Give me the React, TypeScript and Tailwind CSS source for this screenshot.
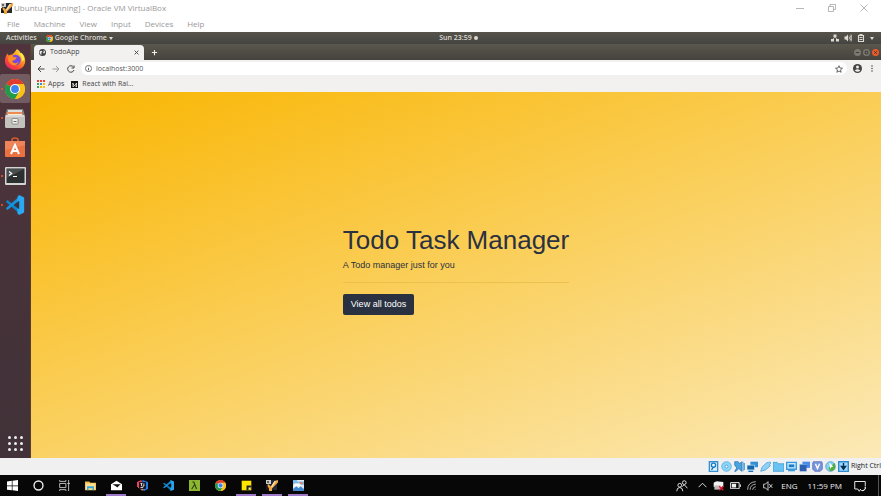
import React from "react";

type IconProps = { className?: string };

const uiFont = "font-['Open_Sans','Noto_Sans',sans-serif]";

function VirtualBoxLogo({ className }: IconProps) {
  return (
    <svg viewBox="0 0 12 12" className={className} aria-hidden="true">
      <path d="M1 1h10v10H1z" fill="#1d2740" />
      <path d="M0 1h5v4H0z" fill="#cfcdc6" />
      <path d="M1 2h2v2H1z" fill="#5e646e" />
      <path d="M0 6l3 1v4H0z" fill="#1a1a1a" />
      <path d="M2 5l3 2.500L8.500 2 12 1v2.500L8 7.500 6 9.500V12H3V9.500L1.500 7z" fill="#f2a53c" />
      <path d="M5 7.500L8.500 2l1.500.5L6 8.500z" fill="#ffe0a0" />
      <path d="M8 8.500l3-1V11H8z" fill="#2b2b2b" />
    </svg>
  );
}

function ChromeLogo({ className }: IconProps) {
  return (
    <svg viewBox="0 0 24 24" className={className} aria-hidden="true">
      <circle cx="12" cy="12" r="12" fill="#fbc116" />
      <path d="M12 12L1.6 6A12 12 0 0 1 22.4 6z" fill="#e33b2e" />
      <path d="M1.6 6A12 12 0 0 0 12 24l5.2-9L12 12z" fill="#229a4b" />
      <path d="M12 6h10.4A12 12 0 0 1 12 24l5.2-9z" fill="#fbc116" />
      <circle cx="12" cy="12" r="6" fill="#fff" />
      <circle cx="12" cy="12" r="4.7" fill="#3f83ee" />
    </svg>
  );
}

function FirefoxLogo({ className }: IconProps) {
  return (
    <svg viewBox="0 0 24 24" className={className} aria-hidden="true">
      <defs>
        <linearGradient id="fox" x1="0.9" y1="0" x2="0.2" y2="1">
          <stop offset="0" stopColor="#fff04a" />
          <stop offset="0.4" stopColor="#ff9a20" />
          <stop offset="0.75" stopColor="#fa4338" />
          <stop offset="1" stopColor="#e32474" />
        </linearGradient>
      </defs>
      <path d="M4 5l1 2q2-1 4-1l2-2q3-3 3-4 4 2 5 6l1-1q4 5 3 10-2 8-11 8Q2 22 1 14 1 8 4 5z" fill="url(#fox)" />
      <circle cx="12.5" cy="12" r="5.8" fill="#7548df" />
      <path d="M5 8q3-2 6 1h3l-2 3q-3 0-3 2 3 3 7 0-3 6-8 3-5-4-3-9z" fill="#ff8b25" />
      <path d="M16 5q5 4 3 9l3-2q0-5-3-8z" fill="#ffe94a" />
    </svg>
  );
}

function FilesIcon({ className }: IconProps) {
  return (
    <svg viewBox="0 0 20 20" className={className} aria-hidden="true">
      <path d="M2 1h16l2 7H0z" fill="#85827d" />
      <path d="M3 2h14v2H3z" fill="#ddd" />
      <path d="M2 4h15l1 4H2z" fill="#ee8953" />
      <path d="M3 6h14v2H3z" fill="#fff0dc" />
      <rect y="7" width="20" height="13" rx="1.5" fill="#c4c2bf" />
      <path d="M1 8h18" stroke="#efefef" />
      <rect x="7" y="10.5" width="6" height="5.5" rx="0.7" fill="#f1f1f0" stroke="#777" strokeWidth="0.8" />
      <path d="M8.5 13h3v1h-3z" fill="#666" />
    </svg>
  );
}

function SoftwareIcon({ className }: IconProps) {
  return (
    <svg viewBox="0 0 20 20" className={className} aria-hidden="true">
      <path d="M7 5V3q0-2 3-2t3 2v2" fill="none" stroke="#d85b2b" strokeWidth="1.6" />
      <path d="M0 4h20v15q0 1-1 1H1q-1 0-1-1z" fill="#ec7140" />
      <path d="M0 4h20v4L0 13z" fill="#ee8459" />
      <path d="M6 17l4-9 4 9M7 14h6" fill="none" stroke="#fff" strokeWidth="2" />
    </svg>
  );
}

function TerminalIcon({ className }: IconProps) {
  return (
    <svg viewBox="0 0 21 18" className={className} aria-hidden="true">
      <rect width="21" height="18" rx="1" fill="#d3d3d0" />
      <rect x="1.5" y="1.5" width="18" height="14.5" fill="#2c3030" />
      <path d="M2 2h17L2 11z" fill="#4a4e4e" />
      <path d="M4 4.5l2.7 2L4 8.5M8 9.5h4" fill="none" stroke="#fff" strokeWidth="1.2" />
    </svg>
  );
}

function CodeLogo({ className }: IconProps) {
  return (
    <svg viewBox="0 0 24 24" className={className} aria-hidden="true">
      <path d="M1 8l2-2L18 18v5z" fill="#0d84cd" />
      <path d="M1 16l2 2L18 6V1z" fill="#1593df" />
      <path d="M17 0l6 3v18l-6 3-2-2V2z" fill="#2ba8f2" />
      <path d="M17 7v10l-6-5z" fill="#32333e" />
    </svg>
  );
}

function Glyph({ className, children, box = "0 0 16 16" }: IconProps & { children: React.ReactNode; box?: string }) {
  return (
    <svg viewBox={box} className={className} fill="none" stroke="currentColor" strokeWidth="1.6" aria-hidden="true">
      {children}
    </svg>
  );
}

function TitleBar() {
  return (
    <header className="flex h-4 items-center bg-white text-[#999]">
      <VirtualBoxLogo className="ml-px size-3" />
      <h1 className="ml-px grow text-[8px]">Ubuntu [Running] - Oracle VM VirtualBox</h1>
      <div className="flex pr-px text-[#a5a5a5]">
        <button aria-label="Minimize" className="flex w-8 justify-center">
          <Glyph className="size-2" box="0 0 8 8"><path d="M0 4.5h8" strokeWidth="0.8" /></Glyph>
        </button>
        <button aria-label="Restore" className="flex w-8 justify-center">
          <Glyph className="size-2" box="0 0 8 8"><path d="M.5 2.5h5v5h-5zM2 2.500V.5h5.500v5H6" strokeWidth="0.8" /></Glyph>
        </button>
        <button aria-label="Close" className="flex w-8 justify-center">
          <Glyph className="size-2" box="0 0 8 8"><path d="M.5.5l7 7M7.500.5l-7 7" strokeWidth="0.8" /></Glyph>
        </button>
      </div>
    </header>
  );
}

function MenuBar() {
  return (
    <nav className="flex h-4 items-center gap-[14px] bg-white pl-[7px] text-[8px] text-[#999]">
      {["File", "Machine", "View", "Input", "Devices", "Help"].map((item) => (
        <button key={item}>{item}</button>
      ))}
    </nav>
  );
}

function SystemBar() {
  return (
    <div className="grid h-3 grid-cols-3 items-center bg-linear-to-b from-[#56534b] to-[#454440] px-[5px] text-[7px] leading-3 font-semibold text-[#dedbd3]">
      <div className="flex items-center gap-2">
        <button className="px-px">Activities</button>
        <button className="flex items-center gap-[2px]">
          <ChromeLogo className="size-[7px]" />
          Google Chrome
          <svg viewBox="0 0 4 3" className="w-1" aria-hidden="true"><path d="M0 0h4L2 3z" fill="currentColor" /></svg>
        </button>
      </div>
      <div className="flex items-center justify-center gap-[2px] pl-9">
        Sun 23:59 <span className="size-1 rounded-full bg-[#dedbd3]" />
      </div>
      <div className="flex items-center justify-end gap-[5px] pr-[2px]">
        <Glyph className="size-2">
          <g fill="currentColor" stroke="none"><path d="M5 1h6v5H5zM0 10h6v5H0zM10 10h6v5h-6z" /></g>
          <path d="M8 5L3 12M8 5l5 7" />
        </Glyph>
        <Glyph className="size-2">
          <path d="M1 5h3l4-4v14l-4-4H1z" fill="currentColor" stroke="none" />
          <path d="M10 5q2 3 0 6M12 3q4 5 0 10M14 1q4 7 0 14" />
        </Glyph>
        <Glyph className="size-2">
          <path d="M3 3h10v12H3zM5 1h6M5 7h6M5 11h6" strokeWidth="2.200" />
        </Glyph>
        <svg viewBox="0 0 4 3" className="w-1" aria-hidden="true"><path d="M0 0h4L2 3z" fill="currentColor" /></svg>
      </div>
    </div>
  );
}

function Launcher() {
  const apps = [
    { name: "Firefox", icon: <FirefoxLogo className="size-[22px]" />, running: false, active: false },
    { name: "Chrome", icon: <ChromeLogo className="size-5" />, running: true, active: true },
    { name: "Files", icon: <FilesIcon className="size-5" />, running: true, active: false },
    { name: "Software", icon: <SoftwareIcon className="size-5" />, running: false, active: false },
    { name: "Terminal", icon: <TerminalIcon className="w-[21px]" />, running: true, active: false },
    { name: "Code", icon: <CodeLogo className="size-5" />, running: true, active: false },
  ];
  return (
    <aside className="flex w-[31px] shrink-0 flex-col border-r border-[#5d3d30] bg-linear-to-b from-[#50333c] to-[#403238] pt-px">
      {apps.map((app) => (
        <button
          key={app.name}
          aria-label={app.name}
          className={`flex h-[29px] items-center rounded-xs pr-[3px] ${app.active ? "bg-[#725b61]" : ""}`}
        >
          <span className={`ml-px size-[2px] rounded-full ${app.running ? "bg-[#f05a28]" : ""}`} />
          <span className="flex grow justify-center">{app.icon}</span>
        </button>
      ))}
      <button aria-label="Show applications" className="mt-auto mb-[7px] flex justify-center">
        <span className="grid grid-cols-3 gap-[3px]">
          {Array.from({ length: 9 }, (_, i) => (
            <span key={i} className="size-[3px] rounded-full bg-[#eee]" />
          ))}
        </span>
      </button>
    </aside>
  );
}

function TabStrip() {
  return (
    <div className="flex h-4 items-end bg-linear-to-b from-[#5a574d] to-[#45433d] pl-[3px]">
      <div className="flex h-[15px] w-[110px] items-center rounded-t-sm bg-[#f2f1f0] px-[5px] text-[7px] text-[#444]">
        <svg viewBox="0 0 16 16" className="mr-1 size-[7px]" aria-hidden="true">
          <circle cx="8" cy="8" r="8" fill="#444" />
          <path d="M2 5l4-1 2 3-3 1 1 4-2 1-3-5zM10 3l3 1 1 4-3 2-2-2 2-2z" fill="#eee" />
        </svg>
        <span className="grow">TodoApp</span>
        <button aria-label="Close tab">
          <Glyph className="size-[5px]"><path d="M2 2l12 12M14 2L2 14" strokeWidth="3" /></Glyph>
        </button>
      </div>
      <button aria-label="New tab" className="mb-1 ml-[7px] text-[#eee]">
        <Glyph className="size-[7px]"><path d="M8 2v12M2 8h12" strokeWidth="2.500" /></Glyph>
      </button>
      <div className="mr-[2px] mb-1 ml-auto flex gap-[2px]">
        {[
          { label: "Minimize browser", tone: "bg-[#7b7971]", mark: "M4 8h8" },
          { label: "Maximize browser", tone: "bg-[#7b7971]", mark: "M5 5h6v6H5z" },
          { label: "Close browser", tone: "bg-[#ed5a29]", mark: "M5 5l6 6M11 5l-6 6" },
        ].map((b) => (
          <button key={b.label} aria-label={b.label} className={`size-[7px] rounded-full text-[#35332f] ${b.tone}`}>
            <Glyph className="size-full"><path d={b.mark} strokeWidth="2" /></Glyph>
          </button>
        ))}
      </div>
    </div>
  );
}

function Toolbar() {
  return (
    <div className="flex h-[17px] items-center bg-[#f2f1f0] pr-2 pl-[6px] text-[#444]">
      <div className="flex gap-[7px]">
        <button aria-label="Back"><Glyph className="size-2"><path d="M15 8H2M8 2L2 8l6 6" strokeWidth="2" /></Glyph></button>
        <button aria-label="Forward" className="text-[#999]"><Glyph className="size-2"><path d="M1 8h13M8 2l6 6-6 6" strokeWidth="2" /></Glyph></button>
        <button aria-label="Reload"><Glyph className="size-2"><path d="M13 4a6.500 6.500 0 1 0 1 6M14 1v5H9" strokeWidth="2" /></Glyph></button>
      </div>
      <div className="ml-[6px] flex h-[13px] grow items-center gap-1 rounded-full bg-white px-1">
        <Glyph className="size-[7px]"><circle cx="8" cy="8" r="7" /><path d="M8 7v5M8 4v1" strokeWidth="2" /></Glyph>
        <input
          aria-label="Address"
          className="h-3 min-w-0 grow text-[7px] text-[#555] outline-none"
          defaultValue="localhost:3000"
        />
        <button aria-label="Bookmark this page">
          <Glyph className="size-2"><path d="M8 1.500l2 4.500 5 .5-4 3.200 1.300 4.800L8 12l-4.300 2.500L5 9.700 1 6.500 6 6z" /></Glyph>
        </button>
      </div>
      <div className="ml-[6px] flex items-center gap-[9px]">
        <button aria-label="Profile">
          <svg viewBox="0 0 18 18" className="size-[9px]" aria-hidden="true">
            <circle cx="9" cy="9" r="9" fill="#444" /><circle cx="9" cy="6" r="3" fill="#eee" />
            <path d="M3.500 13q5.500-5 11 0-5 5-11 0z" fill="#eee" />
          </svg>
        </button>
        <button aria-label="Browser menu">
          <svg viewBox="0 0 4 14" className="h-[7px]" fill="#555" aria-hidden="true">
            <circle cx="2" cy="2" r="1.600" /><circle cx="2" cy="7" r="1.600" /><circle cx="2" cy="12" r="1.600" />
          </svg>
        </button>
      </div>
    </div>
  );
}

const appDots = ["bg-[#ea4335]", "bg-[#ea4335]", "bg-[#ea4335]", "bg-[#34a853]", "bg-[#4285f4]", "bg-[#fbbc05]", "bg-[#34a853]", "bg-[#fbbc05]", "bg-[#fbbc05]"];

function Bookmarks() {
  return (
    <div className="flex h-[15px] items-center gap-[7px] bg-[#f2f1f0] pb-px pl-[6px] text-[7px] text-[#444]">
      <a href="#apps" className="flex items-center gap-[3px]">
        <svg viewBox="0 0 8 8" className="size-2" aria-hidden="true">
          <path d="M0 0h2v2H0zM3 0h2v2H3zM6 0h2v2H6z" fill="#ea4335" />
          <path d="M0 3h2v2H0zM0 6h2v2H0z" fill="#34a853" />
          <path d="M3 3h2v2H3z" fill="#4285f4" />
          <path d="M6 3h2v2H6zM3 6h2v2H3zM6 6h2v2H6z" fill="#fbbc05" />
        </svg>
        Apps
      </a>
      <a href="#article" className="flex items-center gap-1">
        <svg viewBox="0 0 14 14" className="size-[7px]" aria-hidden="true">
          <path d="M0 0h14v14H0z" fill="#111" />
          <path d="M3 4l4 6 4-6v7M4 4v6M3 11h3M9 11h3" fill="none" stroke="#fff" strokeWidth="1.500" />
        </svg>
        React with Rai…
      </a>
    </div>
  );
}

function Page() {
  return (
    <main className="flex grow items-center justify-center bg-[linear-gradient(160deg,#f9b500,#fbe9b7)] font-['Liberation_Sans',Arial,sans-serif] text-[#2a3140]">
      <section className="pb-3">
        <h2 className="text-[26px] leading-8">Todo Task Manager</h2>
        <p className="mt-[2px] text-[9px] leading-[14px]">A Todo manager just for you</p>
        <hr className="mt-[10px] mb-[11px] border-[#ecc04f]" />
        <a href="#todos" className="block w-fit rounded-xs bg-[#2a3140] px-2 py-1 text-[9px] leading-[13px] text-white">
          View all todos
        </a>
      </section>
    </main>
  );
}

const deviceIcons: { name: string; art: React.ReactNode }[] = [
  { name: "Hard disk", art: <><path d="M2 1h12v14H2z" fill="#e0f2ff" stroke="#368fd0" strokeWidth="2" /><circle cx="8" cy="6" r="3" fill="#fff" stroke="#1679be" strokeWidth="2" /><path d="M8 9l-3 4" stroke="#1679be" strokeWidth="2" /></> },
  { name: "Optical disk", art: <><circle cx="8" cy="8" r="7" fill="#8dd4f7" stroke="#45a7df" /><circle cx="8" cy="8" r="2" fill="#fff" stroke="#2f8cc9" /></> },
  { name: "Audio", art: <><path d="M1 1h5l2 3 3-3v14l-4-4-4 4H1l3-5-3-4z" fill="#4aa5e0" stroke="#1d6fae" /><path d="M13 1v14M15 3v10" stroke="#3b93d6" strokeWidth="1.500" /></> },
  { name: "Network", art: <><path d="M5 1h11v8H5z" fill="#338ed1" /><path d="M0 6h11v7H0z" fill="#1366ab" stroke="#c8e7fa" /><path d="M2 15h7" stroke="#1b75ba" strokeWidth="2" /></> },
  { name: "USB", art: <path d="M1 15l2-6 7-7 2 1 2-2 2 2-2 2 1 2-7 6z" fill="#8fd2f7" stroke="#3c93cc" /> },
  { name: "Shared folders", art: <path d="M0 2h6l2 2h8v11H0z" fill="#69c3f2" stroke="#2a92d1" /> },
  { name: "Display", art: <><path d="M1 2h14v10H1z" fill="#c6e9ff" stroke="#3a9add" strokeWidth="2" /><path d="M4 5h8v4H4z" fill="#1f7cc0" /><path d="M3 14h10" stroke="#3a9add" strokeWidth="2" /></> },
  { name: "Recording", art: <><path d="M5 1h11v9H5z" fill="#4b8be7" /><path d="M1 5h10v10H1z" fill="#2f5fb3" /><path d="M1 5h10" stroke="#75bce9" /></> },
  { name: "Virtualization", art: <><path d="M2 1h12l1 2v9l-3 3H4l-3-3V3z" fill="#7894db" stroke="#5068b4" /><path d="M5 4l3 7 3-7" fill="none" stroke="#fff" strokeWidth="2" /></> },
  { name: "Mouse integration", art: <><circle cx="8" cy="8" r="7" fill="#8ad2f2" stroke="#3992ca" /><path d="M8 15l-3-5 9-7 1 5q0 6-7 7z" fill="#4fae3c" /><path d="M6 2l6 6-3 1-1 3z" fill="#fff" /></> },
  { name: "Keyboard", art: <><path d="M1 1h14v14H1z" fill="#9ed8f8" stroke="#2c8bd0" strokeWidth="2" /><path d="M8 3v5M5 8h6l-3 4z" fill="#062e5d" stroke="#062e5d" strokeWidth="2" /></> },
];

function DeviceBar() {
  return (
    <div className="flex h-[17px] items-center justify-end gap-[2px] bg-[#f0f0f0]">
      {deviceIcons.map((d) => (
        <button key={d.name} aria-label={d.name}>
          <svg viewBox="0 0 16 16" className="size-[11px]" fill="none" aria-hidden="true">{d.art}</svg>
        </button>
      ))}
      <span className="text-[7px] text-[#222]">Right Ctrl</span>
    </div>
  );
}

const pinned: { name: string; open: boolean; art: React.ReactNode }[] = [
  { name: "Start", open: false, art: <path d="M0 2l7-1v7H0zM8 1l8-1v8H8zM0 9h7v6l-7-1zM8 9h8v7l-8-1z" fill="#fff" /> },
  { name: "Search", open: false, art: <circle cx="8" cy="8" r="6.500" stroke="#eee" strokeWidth="2" /> },
  { name: "Task view", open: false, art: <path d="M1 0v2h9V0M1 5h9v6H1zM1 16v-2h9v2M14 0v16M12 5h4" stroke="#ccc" strokeWidth="1.300" /> },
  { name: "File Explorer", open: false, art: <><path d="M0 2h6l2 2h8v11H0z" fill="#f1bd43" /><path d="M1 5h14v9H1z" fill="#ffe092" /><path d="M3 9h10v6h-2v-3H5v3H3z" fill="#35a6dc" /></> },
  { name: "Mail", open: true, art: <><path d="M0 6l8-5 8 5v9H0z" fill="#fff" /><path d="M2 6h12l-5 5-2-2z" fill="#111" /></> },
  { name: "IntelliJ", open: false, art: <><path d="M0 3l6-3 3 5-5 8-4-4z" fill="#e9445f" /><path d="M8 0l8 3v10l-6 3-4-5z" fill="#227ce7" /><path d="M1 10l7 6 2-6z" fill="#f17b27" /><path d="M3 3h10v10H3z" fill="#16141b" /><path d="M5 5h3M6.500 5v4M10 5v4H8M5 11h4" stroke="#fff" strokeWidth="1.200" /></> },
  { name: "VS Code", open: false, art: <><path d="M0 5l2-1 10 8v4z" fill="#0b7dc1" /><path d="M0 11l2 1L12 4V0z" fill="#1588d0" /><path d="M11 0l5 2v12l-5 2z" fill="#29a5ed" /><path d="M12 5v6L8 8z" fill="#111" /></> },
  { name: "Cmder", open: false, art: <><path d="M0 0h16v16H0z" fill="#8db62f" /><path d="M5 3h2l4 10M8 7l-4 6" stroke="#26351b" strokeWidth="1.500" /></> },
  { name: "Chrome", open: false, art: null },
  { name: "Sticky Notes", open: true, art: <><path d="M1 1h14v14H1z" fill="#ffe600" /><path d="M8 8h7v3l-4 4H8z" fill="#252525" /><path d="M11 11h4l-4 4z" fill="#fff6a0" /></> },
  { name: "VirtualBox", open: true, art: null },
  { name: "Photos", open: true, art: <><path d="M0 0h16v16H0z" fill="#ddecf7" /><path d="M0 0h6v6H0zM6 2h10v5H6z" fill="#7fb9e8" /><path d="M0 13l5-4 3 3 3-3 5 4v3H0z" fill="#4287cd" /><path d="M2 5h9v4H2z" fill="#fff" /><path d="M10 3h4v3h-4z" fill="#e77e5a" /></> },
];

function pinnedIcon(name: string, art: React.ReactNode) {
  if (name === "Chrome") return <ChromeLogo className="size-[11px]" />;
  if (name === "VirtualBox") return <VirtualBoxLogo className="size-3" />;
  return <svg viewBox="0 0 16 16" className="size-[11px]" fill="none" aria-hidden="true">{art}</svg>;
}

function Taskbar() {
  return (
    <footer className="flex h-[21px] items-stretch bg-[#070707] text-[8px] text-[#eee]">
      <div className="flex gap-[6px] pl-[2px]">
        {pinned.map((p) => (
          <button
            key={p.name}
            aria-label={p.name}
            className={`flex w-5 items-center justify-center border-b-2 pt-px ${p.open ? "border-[#9c78c6]" : "border-transparent"}`}
          >
            {pinnedIcon(p.name, p.art)}
          </button>
        ))}
      </div>
      <div className="ml-auto flex items-center">
        <button aria-label="People" className="mr-[10px]">
          <Glyph className="size-3"><circle cx="5" cy="7" r="2.500" strokeWidth="1.200" /><circle cx="11" cy="3.500" r="2.500" strokeWidth="1.200" /><path d="M1 15q0-5 4-5t4 5M8 9q3-5 7 2" strokeWidth="1.200" /></Glyph>
        </button>
        <div className="flex items-center gap-[6px]">
          <button aria-label="Hidden icons"><Glyph className="size-[9px]"><path d="M1 11l7-7 7 7" /></Glyph></button>
          <button aria-label="Drive status">
            <svg viewBox="0 0 16 16" className="size-[11px]" aria-hidden="true">
              <path d="M1 4q3-3 7-2l7 1v7H1z" fill="#f2f2f2" /><path d="M2 8h9v6H2z" fill="#bbb" /><path d="M9 9l6 6M15 9l-6 6" stroke="#e51b2b" strokeWidth="2" />
            </svg>
          </button>
          <button aria-label="Battery"><Glyph className="w-[11px]" box="0 0 18 12"><path d="M1 1h14v10H1zM17 4v4" /><path d="M3 3h7v6H3z" fill="currentColor" stroke="none" /></Glyph></button>
          <button aria-label="Wireless" className="text-[#aaa]"><Glyph className="size-[10px]"><path d="M1 14Q1 2 14 1M5 14q0-8 9-9M9 14q0-4 5-5M13 14v-1" /></Glyph></button>
          <button aria-label="Volume muted"><Glyph className="size-[10px]"><path d="M1 5h3l4-4v14l-4-4H1zM10 5l5 6M15 5l-5 6" strokeWidth="1.300" /></Glyph></button>
        </div>
        <button className="ml-2">ENG</button>
        <time className="ml-[10px]">11:59 PM</time>
        <button aria-label="Notifications" className="ml-3">
          <Glyph className="size-3"><path d="M9 12l-2 3-2-3H1V2h14v6M15 9a4 4 0 0 1-5 5 4 4 0 0 0 5-5z" strokeWidth="1.300" /></Glyph>
        </button>
        <span className="ml-3 h-full w-[3px] border-l border-[#555]" />
      </div>
    </footer>
  );
}

export default function App() {
  return (
    <div className={`flex min-h-screen flex-col ${uiFont}`}>
      <TitleBar />
      <MenuBar />
      <SystemBar />
      <div className="flex grow">
        <Launcher />
        <div className="flex min-w-0 grow flex-col">
          <TabStrip />
          <Toolbar />
          <Bookmarks />
          <Page />
        </div>
      </div>
      <DeviceBar />
      <Taskbar />
    </div>
  );
}
